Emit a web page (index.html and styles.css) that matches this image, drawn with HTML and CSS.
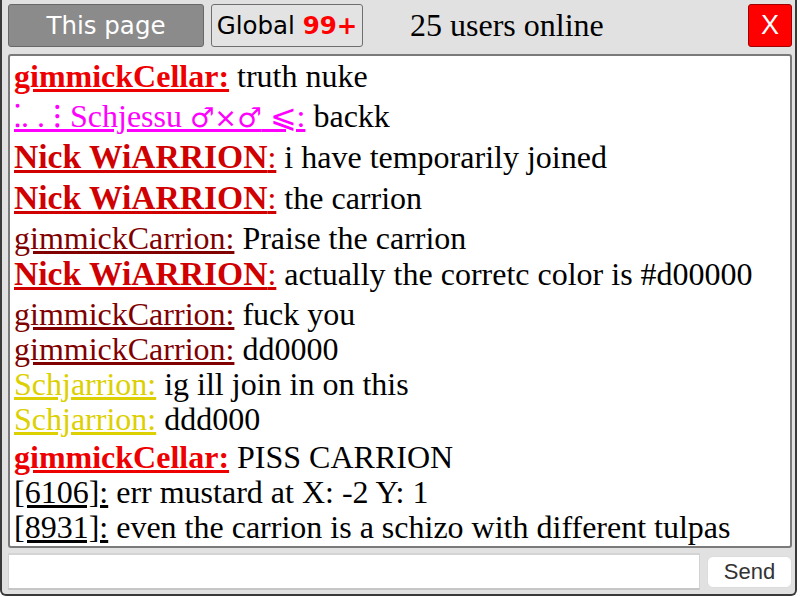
FILE: index.html
```html
<!DOCTYPE html>
<html>
<head>
<meta charset="utf-8">
<link rel="stylesheet" href="styles.css">
</head>
<body>
<div class="chat">
  <div class="topbar">
    <button class="tab tab-active">This page</button>
    <button class="tab">Global <span class="count">99+</span></button>
    <span class="online">25 users online</span>
    <button class="close">X</button>
  </div>
  <div class="messages">
    <div class="msg gap-cellar"><a class="name cellar">gimmickCellar:</a> truth nuke</div>
    <div class="msg gap-jessu"><a class="name jessu">⁚. . ⁝ Schjessu <span class="sym">♂×♂</span> ⩽:</a> backk</div>
    <div class="msg gap-nick"><a class="name nick"><b class="nick-b">Nick WiARRION</b>:</a> i have temporarily joined</div>
    <div class="msg gap-nick"><a class="name nick"><b class="nick-b">Nick WiARRION</b>:</a> the carrion</div>
    <div class="msg"><a class="name carrion">gimmickCarrion:</a> Praise the carrion</div>
    <div class="msg gap-nick"><a class="name nick"><b class="nick-b">Nick WiARRION</b>:</a> actually the corretc color is #d00000</div>
    <div class="msg"><a class="name carrion">gimmickCarrion:</a> fuck you</div>
    <div class="msg"><a class="name carrion">gimmickCarrion:</a> dd0000</div>
    <div class="msg"><a class="name jarrion">Schjarrion:</a> ig ill join in on this</div>
    <div class="msg"><a class="name jarrion">Schjarrion:</a> ddd000</div>
    <div class="msg gap-cellar"><a class="name cellar">gimmickCellar:</a> PISS CARRION</div>
    <div class="msg"><a class="name anon">[6106]:</a> err mustard at X: -2 Y: 1</div>
    <div class="msg"><a class="name anon">[8931]:</a> even the carrion is a schizo with different tulpas</div>
  </div>
  <div class="sendbar">
    <input class="input" type="text">
    <button class="send">Send</button>
  </div>
</div>
</body>
</html>
```
FILE: styles.css
```css
html, body {
  margin: 0;
  padding: 0;
  background: #ffffff;
}

.chat {
  box-sizing: border-box;
  width: 797px;
  height: 596px;
  background: #e1e1e1;
  border: 2px solid #3a3a3a;
  border-top: none;
  border-radius: 0 0 6px 6px;
  padding: 4px 3px 0 6px;
  display: flex;
  flex-direction: column;
}

.topbar {
  display: flex;
  align-items: stretch;
  height: 43px;
  flex: none;
}

.tab {
  box-sizing: border-box;
  height: 43px;
  margin: 0;
  padding: 0;
  border: 1px solid #6f6f6f;
  border-radius: 3px;
  background: #e3e3e3;
  color: #000;
  font-family: "DejaVu Sans", Verdana, sans-serif;
  font-size: 24.5px;
  width: 152px;
  margin-right: 7px;
}

.tab-active {
  width: 196px;
  background: #8b8b8b;
  border-color: #686868;
  color: #ffffff;
}

.count {
  color: #ff0000;
  font-weight: bold;
}

.online {
  margin-left: 40px;
  align-self: center;
  font-family: "Liberation Serif", "Times New Roman", serif;
  font-size: 32px;
  color: #000;
}

.close {
  box-sizing: border-box;
  margin: 0 0 0 auto;
  width: 44px;
  height: 43px;
  padding: 0;
  background: #ff0000;
  border: 1px solid #a00000;
  border-radius: 3px;
  color: #ffffff;
  font-family: "Liberation Sans", Arial, sans-serif;
  font-size: 27px;
}

.messages {
  box-sizing: border-box;
  flex: none;
  height: 494px;
  margin-top: 7px;
  background: #ffffff;
  border: 2px solid #7a7a7a;
  border-radius: 3px;
  padding: 0 4px;
  overflow: hidden;
  font-family: "Liberation Serif", "Times New Roman", "DejaVu Serif", serif;
  font-size: 32px;
  color: #000;
}

.msg {
  white-space: nowrap;
  line-height: 35px;
}

.gap-cellar {
  padding-top: 3px;
}

.gap-nick {
  padding-bottom: 5px;
}

.gap-jessu {
  padding-top: 5px;
  padding-bottom: 4px;
}

.name {
  text-decoration: underline;
}

.cellar {
  color: #ee0000;
  font-weight: bold;
}

.nick {
  color: #d00000;
}

.nick-b {
  font-size: 1.05em;
}

.carrion {
  color: #800000;
}

.jarrion {
  color: #ddd000;
}

.jessu {
  color: #ff00ff;
}

.sym {
  font-family: "DejaVu Sans", sans-serif;
  font-size: 0.85em;
}

.anon {
  color: #000;
}

.sendbar {
  display: flex;
  align-items: center;
  margin-top: 5px;
}

.input {
  box-sizing: border-box;
  flex: none;
  width: 692px;
  height: 37px;
  margin: 0;
  background: #ffffff;
  border: 1px solid #d2d2d2;
  border-top: 2px solid #d4d4d4;
  border-bottom: 2px solid #c6c6c6;
  font-size: 20px;
}

.send {
  box-sizing: border-box;
  margin-left: 7px;
  width: 85px;
  height: 32px;
  padding: 0;
  background: #ffffff;
  border: 1px solid #dcdcdc;
  border-radius: 6px;
  color: #333;
  font-family: "Liberation Sans", Arial, sans-serif;
  font-size: 22px;
}
```
